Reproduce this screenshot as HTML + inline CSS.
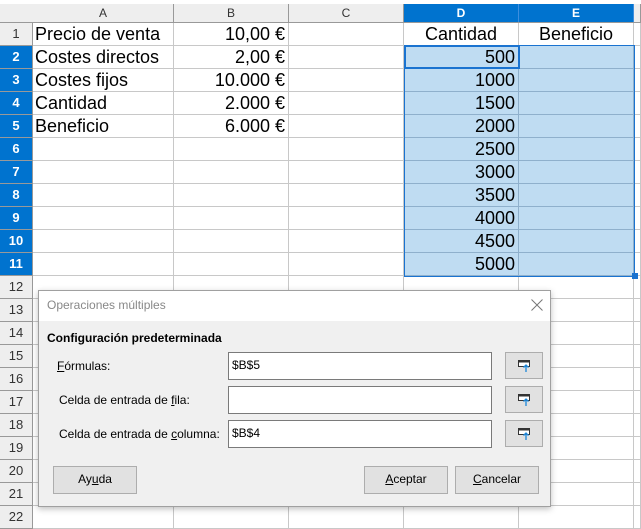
<!DOCTYPE html>
<html><head><meta charset="utf-8"><style>
*{margin:0;padding:0;box-sizing:border-box}
body{width:641px;height:514px;overflow:hidden;background:#fff;font-family:"Liberation Sans",sans-serif;position:relative}
.a{position:absolute}
.h{background:#eeeeee;color:#333;font-size:12px;text-align:center;line-height:18px}
.rh{background:#eeeeee;color:#333;font-size:13px;text-align:center;border-bottom:1px solid #999;border-right:1px solid #999}
.sel{background:#0073cf;color:#fff;font-weight:bold}
.c{font-size:18px;color:#000;line-height:23px;white-space:nowrap;overflow:hidden;border-right:1px solid #c8c8c8;border-bottom:1px solid #c8c8c8}
.r{text-align:right;padding-right:3px}
.l{padding-left:2px}
.m{text-align:center}
.dlg{font-family:"Liberation Sans",sans-serif;font-size:12px;color:#000}
.inp{background:#fff;border:1px solid #7a7a7a;font-size:12px;padding-left:3px;line-height:25px}
.btn{background:#e1e1e1;border:1px solid #adadad;font-size:12px;text-align:center;line-height:25px}
.sb{background:#e1e1e1;border:1px solid #adadad}
</style></head><body>
<div id="g"></div>
<script>
var g=document.getElementById('g'),h='';
var cols=[[33,174,'A'],[174,289,'B'],[289,404,'C'],[404,519,'D'],[519,634,'E'],[634,641,'']];
h+='<div class="a h" style="left:0;top:4px;width:641px;height:19px;border-bottom:1px solid #999"></div>';
cols.forEach(function(c){var s=(c[2]=='D'||c[2]=='E');h+='<div class="a h'+(s?' sel':'')+'" style="left:'+c[0]+'px;top:4px;width:'+(c[1]-c[0])+'px;height:18px;border-right:1px solid '+(s?'#3d8ede':'#999')+'">'+c[2]+'</div>';});
var data={1:['Precio de venta','10,00 €','','Cantidad','Beneficio'],2:['Costes directos','2,00 €','','500',''],3:['Costes fijos','10.000 €','','1000',''],4:['Cantidad','2.000 €','','1500',''],5:['Beneficio','6.000 €','','2000',''],6:['','','','2500',''],7:['','','','3000',''],8:['','','','3500',''],9:['','','','4000',''],10:['','','','4500',''],11:['','','','5000','']};
for(var r=1;r<=22;r++){var t=23+(r-1)*23;var s=(r>=2&&r<=11);
h+='<div class="a rh'+(s?' sel':'')+'" style="left:0;top:'+t+'px;width:33px;height:23px;line-height:22px">'+r+'</div>';
var d=data[r]||['','','','',''];
for(var i=0;i<6;i++){var c=cols[i];var bg=(s&&(i==3||i==4))?'background:#bfdcf2;border-color:#8fb0cc;':'';
var cls='c';if(i==0)cls+=' l';else if(r==1&&i>=3)cls+=' m';else cls+=' r';
h+='<div class="a '+cls+'" style="left:'+c[0]+'px;top:'+t+'px;width:'+(c[1]-c[0])+'px;height:23px;'+bg+'">'+(d[i]||'')+'</div>';}}
h+='<div class="a" style="left:404px;top:45px;width:231px;height:232px;border:1px solid #1a73d0"></div>';
h+='<div class="a" style="left:404px;top:45px;width:116px;height:24px;border:2px solid #1a73d0"></div>';
h+='<div class="a" style="left:632px;top:273px;width:6px;height:6px;background:#1a73d0"></div>';
g.innerHTML=h;
</script>
<div class="a dlg" style="left:38px;top:290px;width:513px;height:217px;background:#f0f0f0;border:1px solid #a0a0a0;box-shadow:0 2px 6px rgba(0,0,0,.25)">
 <div class="a" style="left:0;top:0;width:511px;height:30px;background:#fff;color:#888;line-height:29px;padding-left:8px">Operaciones múltiples</div>
 <svg class="a" style="left:491px;top:7px" width="14" height="14"><path d="M1.5 1.5L12.5 12.5M12.5 1.5L1.5 12.5" stroke="#777" stroke-width="1"/></svg>
 <div class="a" style="left:8px;top:40px;font-weight:bold">Configuración predeterminada</div>
 <div class="a" style="left:18px;top:68px"><u>F</u>órmulas:</div>
 <div class="a" style="left:20px;top:102px">Celda de entrada de <u>f</u>ila:</div>
 <div class="a" style="left:20px;top:136px">Celda de entrada de <u>c</u>olumna:</div>
 <div class="a inp" style="left:189px;top:61px;width:264px;height:28px">$B$5</div>
 <div class="a inp" style="left:189px;top:95px;width:264px;height:28px"></div>
 <div class="a inp" style="left:189px;top:129px;width:264px;height:28px">$B$4</div>
 <div id="sbs"></div>
 <div class="a btn" style="left:14px;top:175px;width:84px;height:28px">Ay<u>u</u>da</div>
 <div class="a btn" style="left:325px;top:175px;width:84px;height:28px"><u>A</u>ceptar</div>
 <div class="a btn" style="left:416px;top:175px;width:84px;height:28px"><u>C</u>ancelar</div>
</div>
<script>
var s='';[61,95,129].forEach(function(t){s+='<div class="a sb" style="left:466px;top:'+t+'px;width:38px;height:27px"><svg width="38" height="27" style="position:absolute;left:-1px;top:-1px"><rect x="13.5" y="8.5" width="11" height="6" fill="#fff" stroke="#333"/><rect x="13.5" y="8.5" width="11" height="2" fill="#333"/><path d="M21 20V13M18.5 15.5L21 13L23.5 15.5" stroke="#1c86d8" stroke-width="1.3" fill="none"/></svg></div>';});
document.getElementById('sbs').innerHTML=s;
</script>
</body></html>
